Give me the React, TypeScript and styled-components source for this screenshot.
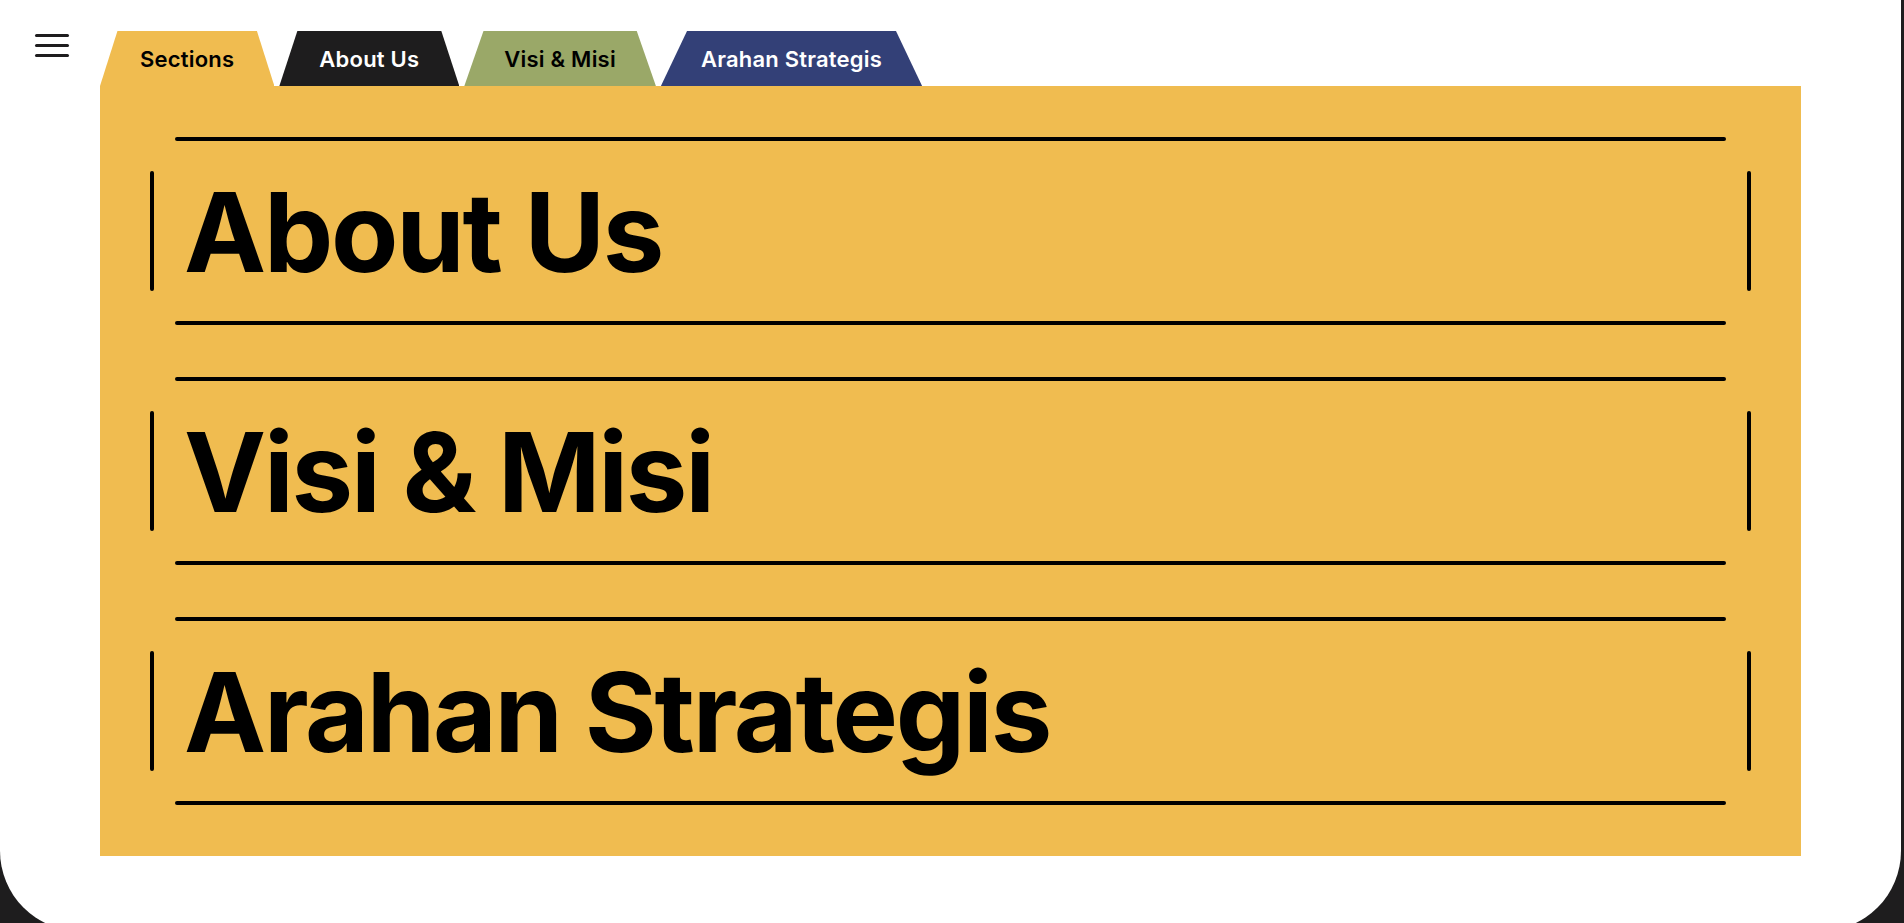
import React from "react";
import styled, { createGlobalStyle } from "styled-components";

const GlobalStyle = createGlobalStyle`
  html, body {
    margin: 0;
    padding: 0;
    height: 100%;
    overflow: hidden;
    background: #1e1d1e;
  }
  body {
    font-family: Inter, "Liberation Sans", sans-serif;
  }
  * { box-sizing: border-box; }
`;

const Page = styled.div`
  height: 100vh;
  overflow: hidden;
  background: #1e1d1e;
`;

const Card = styled.div`
  width: calc(100% - 3px);
  height: 931px;
  background: #ffffff;
  border-radius: 0 0 80px 80px;
  display: flex;
  align-items: flex-start;
  gap: 31px;
  padding: 31px 0 0 35px;
`;

const MenuButton = styled.button`
  width: 34px;
  height: 23px;
  margin-top: 3px;
  padding: 0;
  border: none;
  background: none;
  display: flex;
  flex-direction: column;
  justify-content: space-between;
  cursor: pointer;
  flex: none;
`;

const MenuLine = styled.span`
  display: block;
  height: 3px;
  border-radius: 2px;
  background: #1e1d1e;
`;

const Main = styled.main`
  width: 1701px;
  display: flex;
  flex-direction: column;
`;

const TabRow = styled.nav`
  display: flex;
  gap: 5px;
  height: 55px;
`;

const Tab = styled.a<{ $bg: string; $fg: string }>`
  display: flex;
  align-items: center;
  padding: 0 40px;
  background: ${(p) => p.$bg};
  color: ${(p) => p.$fg};
  clip-path: polygon(10% 0, 90% 0, 100% 100%, 0 100%);
  font-family: Inter, "Liberation Sans", sans-serif;
  font-weight: 600;
  font-size: 22px;
  letter-spacing: 0.01em;
  text-decoration: none;
  white-space: nowrap;
  cursor: pointer;
`;

const Panel = styled.section`
  background: #f0bc50;
  padding: 51px 50px;
  display: flex;
  flex-direction: column;
  gap: 52px;
`;

const Item = styled.div`
  display: flex;
  align-items: center;
`;

const Bar = styled.span`
  flex: none;
  width: 4px;
  height: 120px;
  border-radius: 3px;
  background: #000;
`;

const ItemBody = styled.div`
  flex: 1;
  margin: 0 21px;
  display: flex;
  flex-direction: column;
`;

const Rule = styled.span`
  display: block;
  height: 4px;
  border-radius: 2px;
  background: #000;
`;

const Heading = styled.h2`
  margin: 36px 0 34px;
  padding-left: 9px;
  font-family: Inter, "Liberation Sans", sans-serif;
  font-weight: 700;
  font-size: 110px;
  line-height: 1;
  letter-spacing: -0.02em;
  color: #000;
  white-space: nowrap;
`;

const tabs = [
  { label: "Sections", bg: "#f0bc50", fg: "#000" },
  { label: "About Us", bg: "#1e1d1e", fg: "#fff" },
  { label: "Visi & Misi", bg: "#9aa868", fg: "#000" },
  { label: "Arahan Strategis", bg: "#334077", fg: "#fff" },
];

const sections = ["About Us", "Visi & Misi", "Arahan Strategis"];

export default function App() {
  return (
    <Page>
      <GlobalStyle />
      <Card>
        <MenuButton aria-label="Menu">
          <MenuLine />
          <MenuLine />
          <MenuLine />
        </MenuButton>
        <Main>
          <TabRow>
            {tabs.map((t) => (
              <Tab key={t.label} $bg={t.bg} $fg={t.fg}>
                {t.label}
              </Tab>
            ))}
          </TabRow>
          <Panel>
            {sections.map((s) => (
              <Item key={s}>
                <Bar />
                <ItemBody>
                  <Rule />
                  <Heading>{s}</Heading>
                  <Rule />
                </ItemBody>
                <Bar />
              </Item>
            ))}
          </Panel>
        </Main>
      </Card>
    </Page>
  );
}
